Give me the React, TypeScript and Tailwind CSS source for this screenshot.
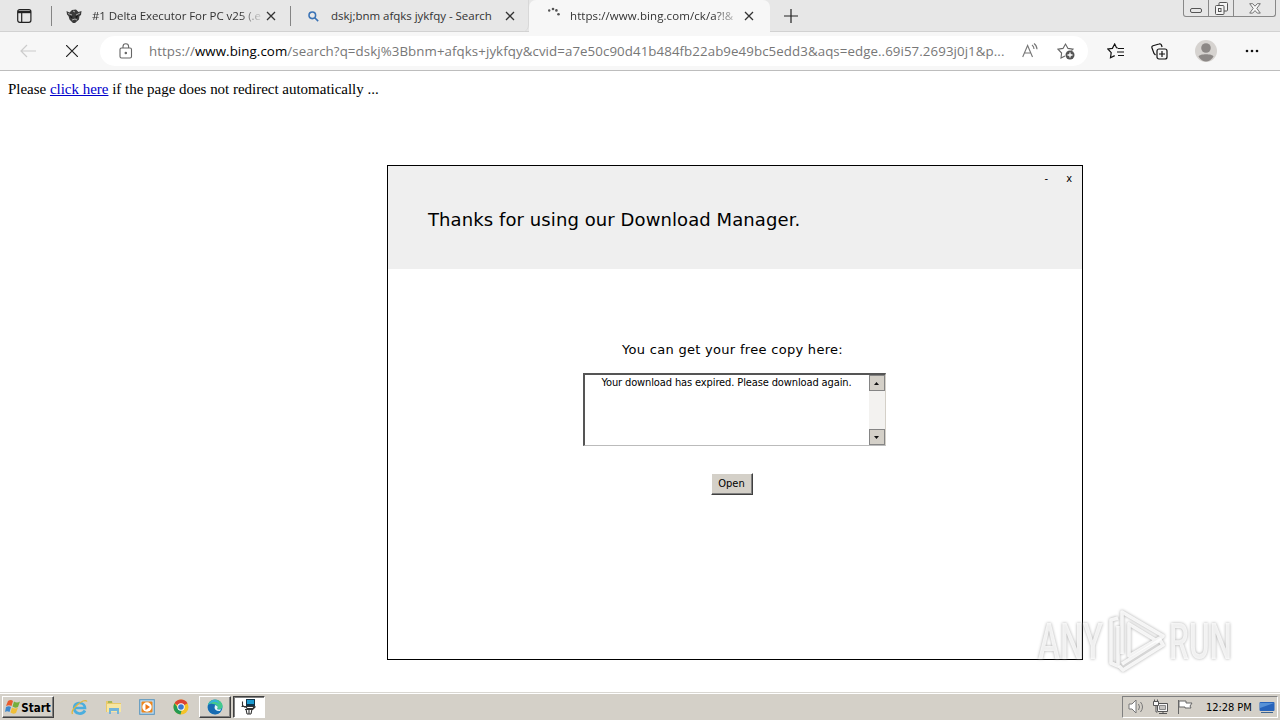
import type { ReactNode } from 'react';

const uiFont = "font-['Open_Sans','Noto_Sans',sans-serif]";
const classicFont = "font-['DejaVu_Sans_Condensed','DejaVu_Sans',sans-serif] [font-stretch:condensed]";
const verdana = "font-['DejaVu_Sans',sans-serif]";

function CloseGlyph({ className = '' }: { className?: string }) {
  return (
    <svg viewBox="0 0 10 10" className={`h-[10px] w-[10px] shrink-0 ${className}`} stroke="#333" strokeWidth="1.3">
      <path d="M1 1l8 8M9 1L1 9" />
    </svg>
  );
}

function Divider() {
  return <span className="h-5 w-px shrink-0 bg-[#858585]" />;
}

function TabStrip() {
  return (
    <div className="flex h-8 shrink-0 border-b border-[#d2d2d2] bg-[#e7e7e7]">
      <div className="flex h-8 w-[51px] items-center pl-[17px]">
        <svg viewBox="0 0 15 14" className="h-[14px] w-[15px]" fill="none" stroke="#222" strokeWidth="1.2">
          <rect x=".7" y=".7" width="13.2" height="12.6" rx="2" />
          <path d="M1 3h13" strokeWidth="2.4" />
          <path d="M4.7 4v9" />
        </svg>
      </div>
      <div className="flex h-8 w-[239px] items-center">
        <Divider />
        <svg viewBox="0 0 16 16" className="ml-[14px] h-4 w-4 shrink-0">
          <path d="M.5 3l3 1.500L6 2l4-.5 2.500 2.500 3-1-.5 4-1.500 1-.5 3.500L9 15H7l-3.500-3.500L2.500 8 1 6.500z" fill="#3a3a3a" />
          <path d="M2 5.500l4 1.500M10 7l4-2M6 12l3-1 2 1M7 3l2 1" stroke="#aaa" fill="none" />
          <path d="M4 8l3 1-2 1zM9 9l3-2-1 3z" fill="#111" />
        </svg>
        <span className="ml-[10px] w-[170px] text-[11.5px] leading-4 tracking-[-0.06px] whitespace-nowrap text-[#333] [mask-image:linear-gradient(90deg,#000_148px,transparent_172px)]">
          #1 Delta Executor For PC v25 (.e
        </span>
        <CloseGlyph className="ml-[4px]" />
      </div>
      <div className="flex h-8 w-[239px] items-center rounded-br-[7px] border-r border-[#d8d8d8]">
        <Divider />
        <svg viewBox="0 0 12 12" className="ml-[17px] h-[11px] w-[11px] shrink-0" fill="none" stroke="#3972b5" strokeWidth="1.7">
          <circle cx="4.7" cy="4.7" r="3.6" />
          <path d="M7.3 7.3l3.8 3.8" />
        </svg>
        <span className="ml-[12px] w-[163px] text-[11.5px] leading-4 tracking-[-0.02px] whitespace-nowrap text-[#333]">dskj;bnm afqks jykfqy - Search</span>
        <CloseGlyph className="ml-[11px]" />
      </div>
      <div className="flex h-8 w-[241px] items-center rounded-t-[7px] bg-[#f7f7f7]">
        <svg viewBox="0 0 14 12" className="mt-[-6px] ml-[18px] h-3 w-[14px] shrink-0" fill="#555">
          <circle cx="2.2" cy="3.5" r="1.2" />
          <circle cx="6" cy="2" r="1.3" />
          <circle cx="9.4" cy="3.4" r="1.3" />
          <circle cx="11.5" cy="7.2" r="1.3" />
        </svg>
        <span className="ml-[9px] w-[165px] text-[11.5px] leading-4 tracking-[0.08px] whitespace-nowrap text-[#333] [mask-image:linear-gradient(90deg,#000_145px,transparent_170px)]">
          https://www.bing.com/ck/a?!&
        </span>
        <CloseGlyph className="ml-[9px]" />
      </div>
      <svg viewBox="0 0 14 14" className="mt-[9px] ml-[14px] h-[14px] w-[14px]" stroke="#222" strokeWidth="1.2">
        <path d="M7 0v14M0 7h14" />
      </svg>
      <div className="mr-[4px] ml-auto flex h-[17px] w-[93px] rounded-b-[3px] border border-t-0 border-[#888]">
        <div className="flex w-[25px] items-end justify-center border-r border-[#888] pb-[3px]">
          <span className="h-[5px] w-[12px] rounded-[2px] border border-[#555]" />
        </div>
        <div className="flex w-[25px] items-center justify-center border-r border-[#888]">
          <svg viewBox="0 0 13 13" className="h-[13px] w-[13px]" fill="#f4f4f4" stroke="#555">
            <rect x="4" y=".5" width="8.5" height="8.5" rx="1" />
            <rect x=".5" y="3.5" width="8.5" height="9" rx="1" />
            <rect x="3.5" y="6.5" width="2.5" height="3" />
          </svg>
        </div>
        <div className="flex flex-1 items-center justify-center">
          <svg viewBox="0 0 12 11" className="h-[11px] w-3" fill="#f8f8f8" stroke="#666" strokeWidth=".9">
            <path d="M.7.7h3L6 3.2 8.3.7h3L7.8 5.4l3.5 4.7h-3L6 7.6l-2.3 2.5h-3l3.5-4.7z" />
          </svg>
        </div>
      </div>
    </div>
  );
}

function Toolbar() {
  return (
    <div className="flex h-[39px] shrink-0 items-center border-b border-[#bdbdbd] bg-[#f7f7f7]">
      <svg viewBox="0 0 16 14" className="ml-5 h-[14px] w-4" fill="none" stroke="#ccc" strokeWidth="1.2">
        <path d="M7 1L1 7l6 6M1 7h15" />
      </svg>
      <svg viewBox="0 0 12 12" className="ml-[30px] h-3 w-3" stroke="#222" strokeWidth="1.2">
        <path d="M0 0l12 12M12 0L0 12" />
      </svg>
      <div className="ml-[22px] flex h-[30px] w-[988px] items-center rounded-full bg-white">
        <svg viewBox="0 0 14 16" className="ml-[19px] h-4 w-[14px] shrink-0" fill="none" stroke="#666" strokeWidth="1.1">
          <rect x="1" y="5" width="11.5" height="10" rx="1.5" />
          <path d="M4 5V3.500a2.800 2.800 0 015.600 0V5" />
          <circle cx="6.8" cy="10" r=".7" fill="#555" />
        </svg>
        <div className="ml-[16px] w-[857px] text-[13.3px] leading-5 tracking-[0.075px] whitespace-nowrap text-[#777]">
          https://<span className="text-black">www.bing.com</span>
          /search?q=dskj%3Bbnm+afqks+jykfqy&cvid=a7e50c90d41b484fb22ab9e49bc5edd3&aqs=edge..69i57.2693j0j1&p...
        </div>
        <svg viewBox="0 0 16 16" className="ml-[16px] h-4 w-4 shrink-0" fill="none" stroke="#777" strokeWidth="1.1">
          <path d="M.7 14L5.600 2.500 10.500 14M2.400 10h6.500M10 2c1.400 1 2 2.200 2 4M12 .5c2 1.500 3 3.300 3 5.800" />
        </svg>
        <svg viewBox="0 0 18 18" className="ml-[19px] h-[18px] w-[18px] shrink-0" fill="none" stroke="#666" strokeWidth="1.1">
          <path d="M8 14l-4 2 .6-5L1 7.2l5-.8L8.500 2 11 6.400l5 .8-1.500 1.500" />
          <circle cx="13" cy="13" r="4.500" fill="#555" stroke="none" />
          <path d="M10.500 13h5M13 10.500v5" stroke="#fff" strokeWidth="1.3" />
        </svg>
      </div>
      <svg viewBox="0 0 18 16" className="ml-[19px] h-4 w-[18px]" fill="none" stroke="#111" strokeWidth="1.2">
        <path d="M11 5l-1.500-.2L7.700 1 5.400 5.400.9 6l3.300 3.700-.7 5 4.200-2.100M11 5.500h6M10 9h7M11 12.500h6" />
      </svg>
      <svg viewBox="0 0 17 17" className="ml-[26px] h-[17px] w-[17px]" fill="none" stroke="#111" strokeWidth="1.2">
        <rect x="6" y="6" width="10" height="10" rx="2" />
        <path d="M11 8v6M8 11h6M4.500 12L3 10.500 1 5c-.4-1 0-2 1-2.300L8 1c1-.4 2 0 2.400 1l.7 2" />
      </svg>
      <svg viewBox="0 0 22 22" className="ml-[27px] h-[22px] w-[22px]">
        <circle cx="11" cy="11" r="11" fill="#d6d3d0" />
        <circle cx="11" cy="8" r="4.800" fill="#8c8886" />
        <path d="M3.500 16.500c1-3 14-3 15 0-1.500 3-5 5-7.500 5s-6-2-7.500-5z" fill="#8c8886" />
      </svg>
      <svg viewBox="0 0 14 4" className="ml-[28px] h-1 w-[14px]" fill="#111">
        <circle cx="2" cy="2" r="1.3" />
        <circle cx="7" cy="2" r="1.3" />
        <circle cx="12" cy="2" r="1.3" />
      </svg>
    </div>
  );
}

function ScrollArrow({ down = false }: { down?: boolean }) {
  return (
    <span className="grid h-4 w-4 place-items-center border border-[#858585] bg-[#d4d0c8]">
      <svg viewBox="0 0 5 3" className="h-[3px] w-[5px]" fill="#111">
        <path d={down ? 'M0 0h5L2.5 3z' : 'M0 3h5L2.5 0z'} />
      </svg>
    </span>
  );
}

function DownloadWindow() {
  return (
    <section className={`absolute top-[165px] left-[387px] flex h-[495px] w-[696px] flex-col border border-black bg-white text-black ${verdana}`}>
      <header className="h-[103px] bg-[#efefef]">
        <div className={`flex h-[24px] items-center justify-end gap-[18px] pr-[10px] text-[11px] leading-none ${classicFont}`}>
          <span>-</span>
          <span>x</span>
        </div>
        <h1 className="mt-[18px] ml-[40px] text-[18px] leading-6 tracking-[0.09px] whitespace-nowrap">Thanks for using our Download Manager.</h1>
      </header>
      <div className="flex flex-col items-center">
        <p className="mt-[71px] mr-[5px] text-[13px] leading-5 tracking-[0.3px] whitespace-nowrap">You can get your free copy here:</p>
        <div className="mt-[13px] mr-[2px] flex h-[73px] w-[303px] border border-t-2 border-l-2 border-t-[#555] border-r-[#d4d0c8] border-b-[#bbb] border-l-[#555]">
          <p className={`flex-1 text-center text-[11px] leading-[15px] tracking-[-0.12px] whitespace-nowrap ${classicFont}`}>Your download has expired. Please download again.</p>
          <div className="flex w-4 flex-col justify-between bg-[#f3f2f0]">
            <ScrollArrow />
            <ScrollArrow down />
          </div>
        </div>
        <button className={`mt-[27px] mr-[7px] h-[22px] w-[42px] border border-t-white border-r-[#404040] border-b-[#404040] border-l-white bg-[#d4d0c8] text-[11px] leading-5 shadow-[inset_-1px_-1px_0_#808080] ${classicFont}`}>
          Open
        </button>
      </div>
    </section>
  );
}

function Watermark() {
  return (
    <svg viewBox="0 0 204 66" className="absolute top-[608px] left-[1034px] h-[66px] w-[204px] overflow-visible [filter:drop-shadow(0_0_1.5px_#999)]" fill="none">
      <g fill="#fff" fillOpacity=".8" fontFamily="Roboto, sans-serif" fontSize="50" fontWeight="500">
        <text x="4" y="51" textLength="65" lengthAdjust="spacingAndGlyphs">ANY</text>
        <text x="135" y="51" textLength="63" lengthAdjust="spacingAndGlyphs">RUN</text>
      </g>
      <g stroke="#fff" strokeOpacity=".85" strokeWidth="3.6" strokeLinejoin="round">
        <path d="M88 46V4l41 24-6 5-28-17v32l34-20" />
        <path d="M84 10l-7 2v43l7 3V18" />
        <path d="M85 58l4 4 40-25-3-5-38 24" />
      </g>
    </svg>
  );
}

function TaskSlot({ children, className = '' }: { children: ReactNode; className?: string }) {
  return <div className={`flex h-[22px] items-center justify-center ${className}`}>{children}</div>;
}

function Taskbar() {
  return (
    <footer className={`flex h-[28px] shrink-0 border-t border-[#d9d7d2] bg-[#d4d0c8] pt-[3px] text-black shadow-[inset_0_1px_0_#fff] ${classicFont}`}>
      <TaskSlot className="ml-[2px] w-[52px] border border-t-white border-r-[#404040] border-b-[#404040] border-l-white shadow-[inset_-1px_-1px_0_#808080]">
        <svg viewBox="0 0 16 16" className="h-4 w-4 shrink-0">
          <path d="M3 2q3-2 5 0L6.500 7Q4 5.500 1 7z" fill="#e95b2d" />
          <path d="M9 2.500q3 2 6 0L13 8q-3 1.500-5.500-.5z" fill="#75ae3d" />
          <path d="M1 8q3-1.500 5 0l-1.500 5Q2 11.500 0 13z" fill="#3d88cd" />
          <path d="M7 8.500q3 2 6 0L11 14q-3 1.500-5.500-.5z" fill="#f0bf38" />
        </svg>
        <span className="pt-[2px] text-[11.5px] leading-4 font-bold">Start</span>
      </TaskSlot>
      <TaskSlot className="ml-[17px] w-[17px]">
        <svg viewBox="0 0 17 17" className="h-[17px] w-[17px]" fill="none">
          <path d="M14 11.500Q12 15 8 14.500C1 13 2 3.500 8.500 4c4 .3 5.500 3 5.500 5H4" stroke="#4baede" strokeWidth="2.700" />
          <path d="M1.500 15C-1 11 13-2 16 2.500" stroke="#e2b73c" strokeWidth="1.300" />
        </svg>
      </TaskSlot>
      <TaskSlot className="ml-[17px] w-[17px]">
        <svg viewBox="0 0 17 16" className="h-4 w-[17px]">
          <path d="M1 2h6l1 2h8v9H1z" fill="#e9c968" />
          <path d="M2 5h14v8H2z" fill="#f7e6a1" />
          <path d="M4 15V9h10v6h-2v-3H6v3z" fill="#73b4d9" />
          <path d="M3 3h4" stroke="#62a346" />
        </svg>
      </TaskSlot>
      <TaskSlot className="ml-[16px] w-[17px]">
        <svg viewBox="0 0 16 16" className="h-4 w-4">
          <rect x=".7" y=".7" width="14.600" height="14.600" fill="#b8d9ef" stroke="#5593be" />
          <rect x="2.500" y="2.500" width="11" height="11" rx="1" fill="#ed861d" />
          <circle cx="8" cy="8" r="4.700" fill="#fff" />
          <path d="M6.500 5l4.500 3-4.500 3z" fill="#ed7414" />
        </svg>
      </TaskSlot>
      <TaskSlot className="ml-[17px] w-[17px]">
        <svg viewBox="0 0 16 16" className="h-4 w-4">
          <circle cx="8" cy="8" r="7.500" fill="#f4c329" />
          <path d="M1.500 4.200a7.500 7.500 0 0113 0L8 8z" fill="#db4335" />
          <path d="M1.500 4.200A7.500 7.500 0 007.500 15.500L9 10 5 9z" fill="#249a53" />
          <circle cx="8" cy="8" r="3.700" fill="#fff" />
          <circle cx="8" cy="8" r="2.800" fill="#3979d0" />
        </svg>
      </TaskSlot>
      <TaskSlot className="ml-[10px] w-[32px] border border-t-white border-r-[#404040] border-b-[#404040] border-l-white shadow-[inset_-1px_-1px_0_#808080]">
        <svg viewBox="0 0 16 16" className="h-4 w-4">
          <circle cx="8" cy="8" r="7.500" fill="#147dc6" />
          <path d="M1 6C2-1 14-1 15.500 6c.8 4-3.500 5-5.500 3.500C12 7 8 3 1 6z" fill="#43c98e" />
          <path d="M.7 7C4-1 11 0 12.500 5 8 1 4 3 .7 7z" fill="#35aee2" />
          <path d="M1 6c5-3 8 0 7 3 0 3 3 4 6 3-4 6-13 3-13-4z" fill="#176bb1" />
          <path d="M8 6q4 1 2 4 2 1 4 0l-1 2q-7 0-5-6z" fill="#e7f6f7" />
        </svg>
      </TaskSlot>
      <TaskSlot className="ml-[2px] w-[32px] border border-t-[#404040] border-r-white border-b-white border-l-[#404040] bg-white shadow-[inset_1px_1px_0_#808080]">
        <svg viewBox="0 0 16 16" className="h-4 w-4">
          <path d="M5 0h9v7H5z" fill="#123449" />
          <path d="M6 1h7v4H6z" fill="#1c9ad0" />
          <path d="M1.500 2.500v4l3 2M.5 7.500h5M14.500 7.500l-3 3M5 7.500h8l-1 2H6zM4 10.500h8M5 10l1 5M8 10v5M11 10l-1 5M6 15h4" fill="none" stroke="#333" strokeWidth="1.1" />
        </svg>
      </TaskSlot>
      <div className="mr-[2px] ml-auto flex h-[22px] w-[156px] items-center border border-t-[#808080] border-r-white border-b-white border-l-[#808080] pl-[5px]">
        <svg viewBox="0 0 17 16" className="h-4 w-[17px]" fill="#fff" stroke="#777">
          <path d="M1 5h3l4-4v13l-4-4H1z" />
          <path d="M10.500 5q2 3 0 6M12.500 3q4 5 0 10" fill="none" />
        </svg>
        <svg viewBox="0 0 16 16" className="ml-[8px] h-4 w-4" fill="#f7f7f7" stroke="#555">
          <path d="M4.500 4.500h10v8h-10zM6 14.500h8M10 12v2" />
          <path d="M6.500 6.500h6v4h-6z" fill="#c5c3c0" stroke="#888" />
          <path d="M.5 2.500h5v4h-5zM1.500 2.500V.5M4.500 2.500V.5M3 7v6h1.500" />
        </svg>
        <svg viewBox="0 0 16 16" className="ml-[8px] h-4 w-4" fill="#fff" stroke="#666">
          <path d="M1.500 1v14M2 2h7v2h6l-2 3 1 2H8V8H2z" />
        </svg>
        <span className="ml-[13px] w-[46px] pt-px text-[11px] leading-4 tracking-[-0.05px] whitespace-nowrap">12:28 PM</span>
        <svg viewBox="0 0 16 13" className="ml-[7px] h-[13px] w-4">
          <rect x=".5" y="1" width="15" height="9" rx="1" fill="#2764bb" />
          <path d="M1 2h14L1 7z" fill="#5792d7" />
          <path d="M2 11h12v1H2z" fill="#3c638f" />
        </svg>
      </div>
    </footer>
  );
}

export default function App() {
  return (
    <div className={`relative flex h-[720px] w-[1280px] flex-col overflow-hidden bg-white ${uiFont}`}>
      <TabStrip />
      <Toolbar />
      <main className="flex-1 pt-[8px] pl-[8px] font-['Liberation_Serif',serif] text-[15px] leading-5 tracking-[-0.02px] text-black">
        Please <a href="#" className="text-[#0000cc] underline">click here</a> if the page does not redirect automatically ...
      </main>
      <Taskbar />
      <DownloadWindow />
      <Watermark />
    </div>
  );
}
